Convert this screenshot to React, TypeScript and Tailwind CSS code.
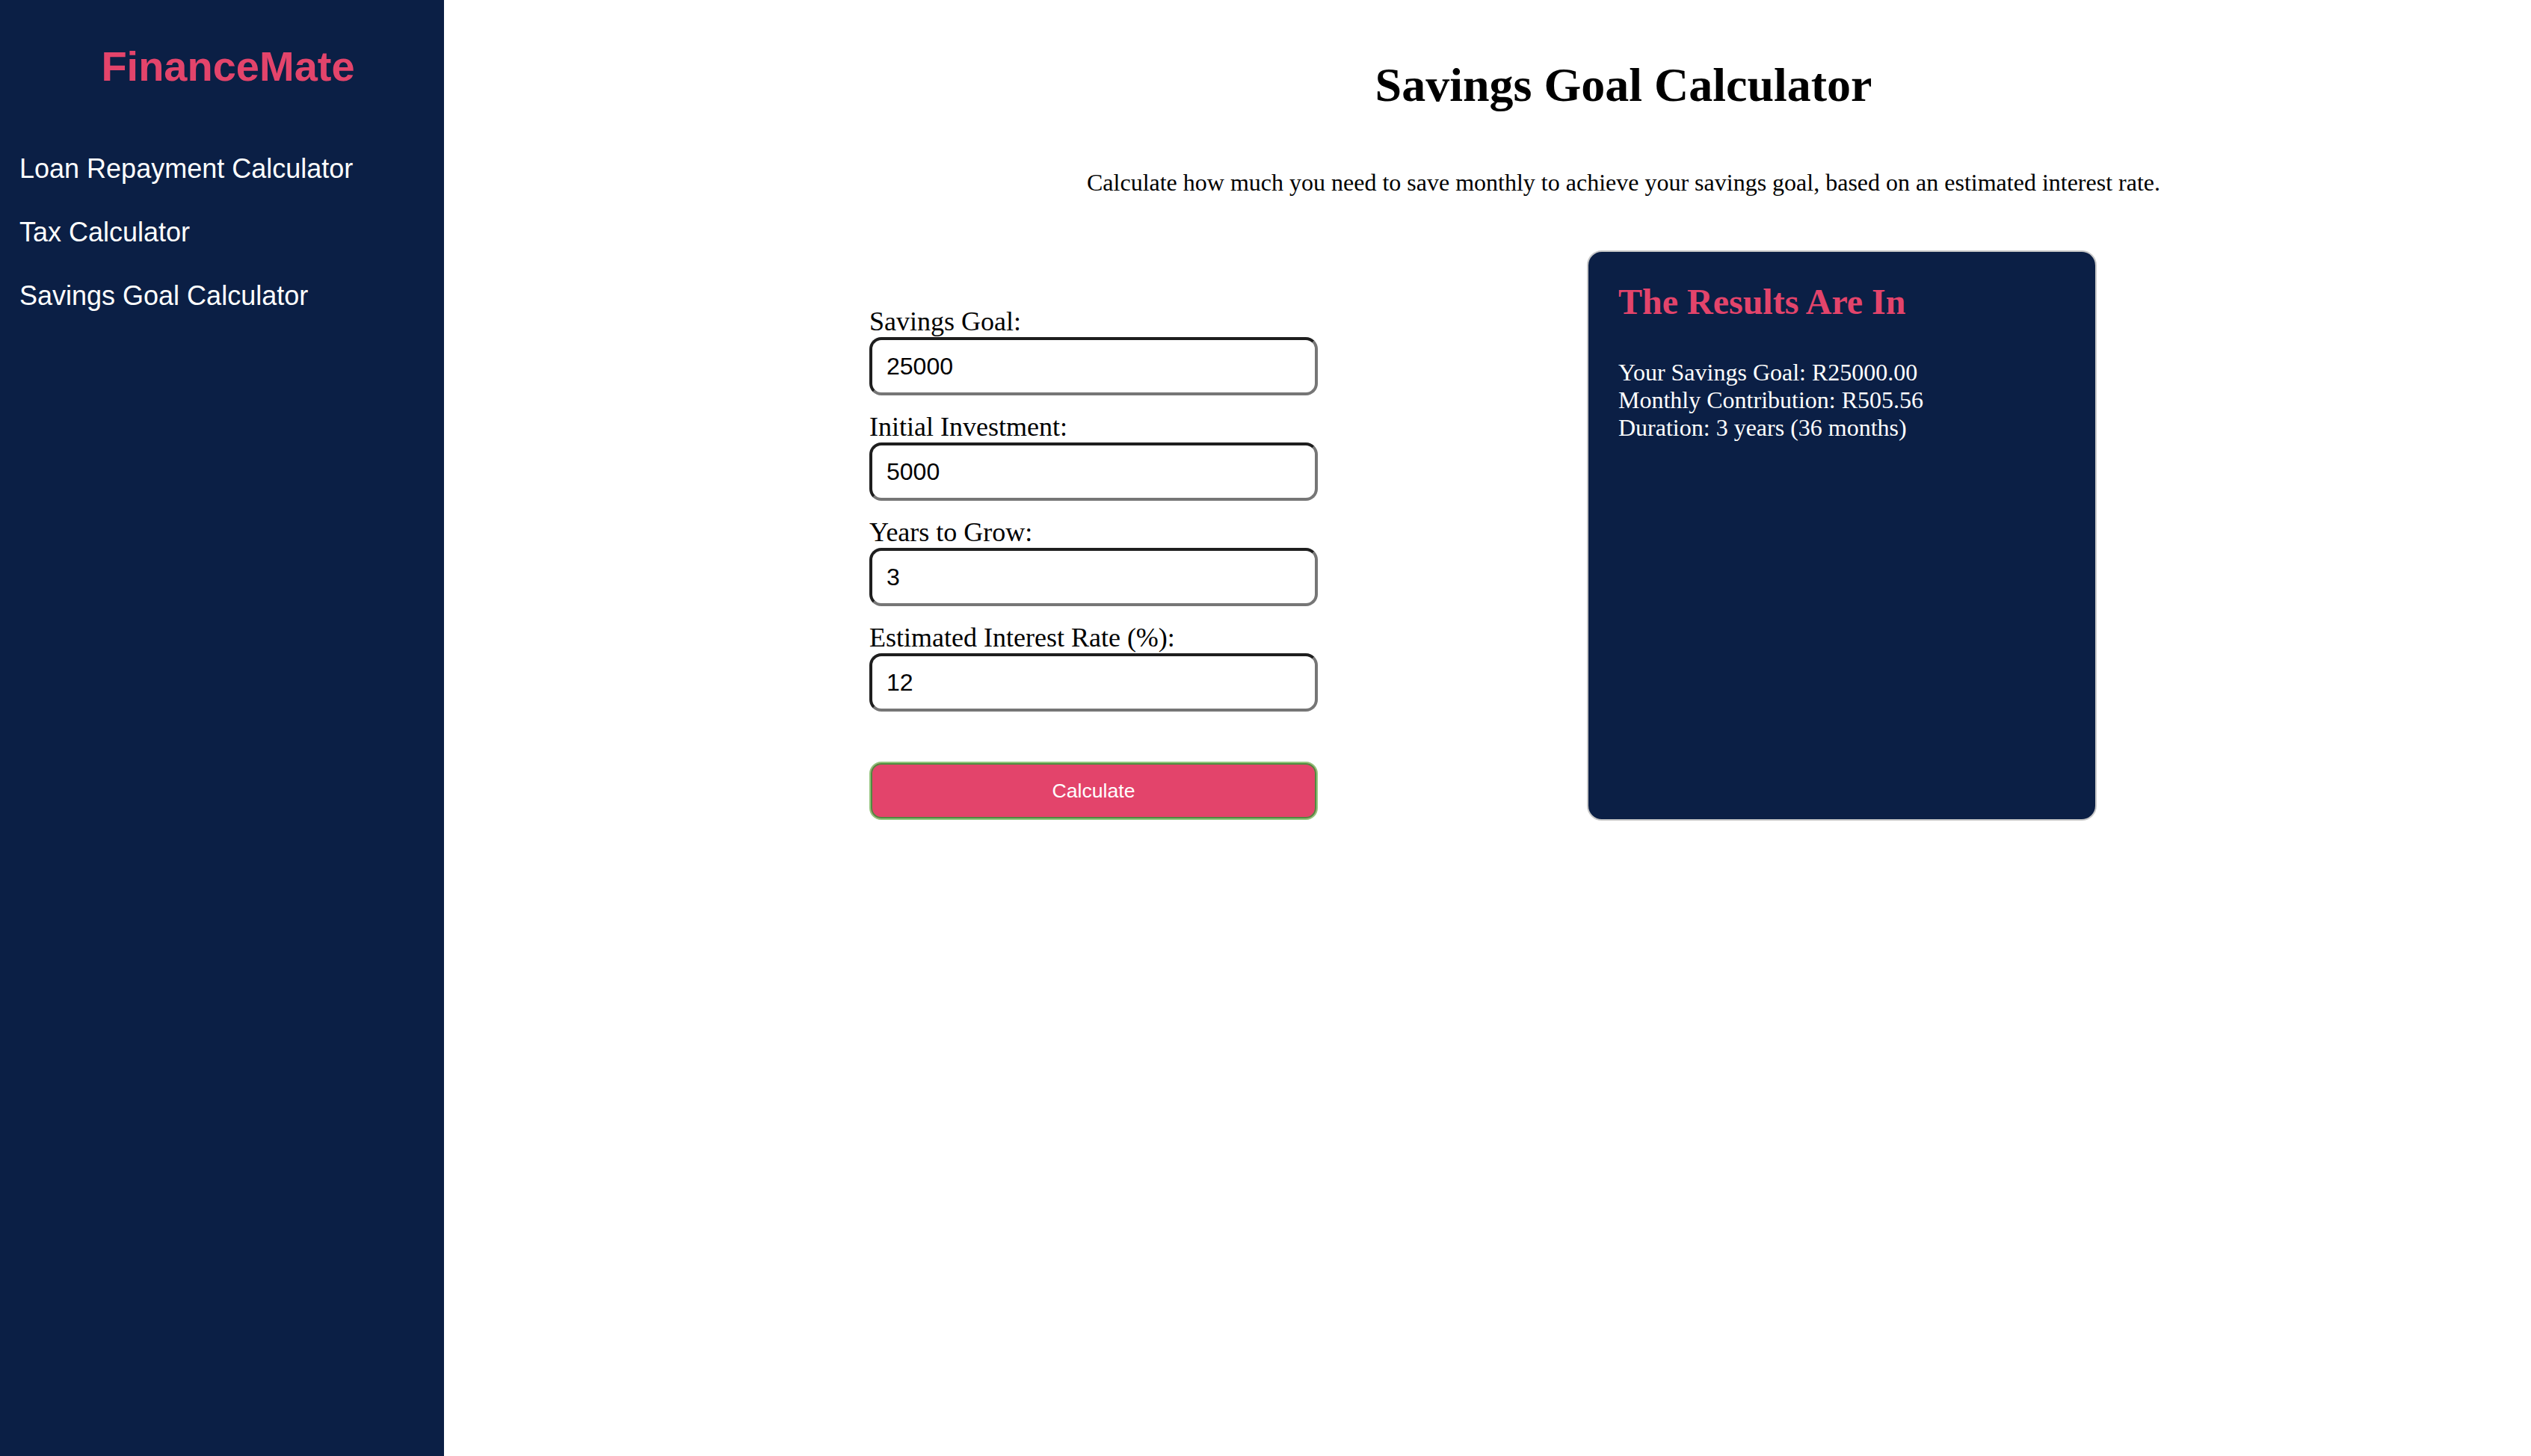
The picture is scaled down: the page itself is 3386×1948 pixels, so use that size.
import { useState } from "react";

const navLinks = ["Loan Repayment Calculator", "Tax Calculator", "Savings Goal Calculator"];

const fields = [
    { label: "Savings Goal:", value: "25000" },
    { label: "Initial Investment:", value: "5000" },
    { label: "Years to Grow:", value: "3" },
    { label: "Estimated Interest Rate (%):", value: "12" },
];

export default function App() {
    const [values, setValues] = useState(fields.map((f) => f.value));

    return (
        <div className="flex min-h-screen bg-white">
            {/* Sidebar */}
            <aside className="w-[594px] shrink-0 bg-[#0b1f45] pl-[26px] pr-[10px] pt-[57px] font-['Liberation_Sans',Arial,sans-serif]">
                <h1 className="text-center text-[56px] font-bold leading-[64px] text-[#e3446b]">FinanceMate</h1>
                <nav className="mt-[84px] flex flex-col gap-[44px]">
                    {navLinks.map((link) => (
                        <a key={link} href="#" className="text-[36px] leading-[41px] text-white">
                            {link}
                        </a>
                    ))}
                </nav>
            </aside>

            {/* Main */}
            <main className="flex-1 pt-[77px] font-['Liberation_Serif','Times_New_Roman',serif] text-black">
                <div className="pl-[364px] text-center">
                    <h2 className="text-[64px] font-bold leading-[74px]">Savings Goal Calculator</h2>
                    <p className="mt-[75px] text-[32px] leading-[37px]">
                        Calculate how much you need to save monthly to achieve your savings goal, based on an estimated interest rate.
                    </p>
                </div>

                <div className="mt-[72px] flex items-start justify-center gap-[360px] pr-[12px]">
                    {/* Form */}
                    <form className="flex w-[600px] flex-col pt-[75px]" onSubmit={(e) => e.preventDefault()}>
                        <div className="flex flex-col gap-[22px]">
                            {fields.map((field, i) => (
                                <label key={field.label} className="flex flex-col text-[36px] leading-[41px]">
                                    {field.label}
                                    <input
                                        type="text"
                                        value={values[i]}
                                        onChange={(e) => setValues(values.map((v, j) => (j === i ? e.target.value : v)))}
                                        className="h-[78px] w-full rounded-[16px] border-4 border-t-[#1e1e1e] border-l-[#1e1e1e] border-b-[#767676] border-r-[#767676] bg-white px-[19px] font-['Liberation_Sans',Arial,sans-serif] text-[32px] leading-normal text-black outline-none"
                                    />
                                </label>
                            ))}
                        </div>
                        <button
                            type="submit"
                            className="mt-[67px] h-[78px] w-full rounded-[16px] border-2 border-[#93c47d] bg-[#e3446b] font-['Liberation_Sans',Arial,sans-serif] text-[26.67px] text-white shadow-[inset_0_0_0_2px_#4f8a3f]"
                        >
                            Calculate
                        </button>
                    </form>

                    {/* Results */}
                    <div className="h-[763px] w-[682px] rounded-[20px] border-2 border-[#c8c8c8] bg-[#0b1f45] px-[40px] pt-[39px] text-white">
                        <h3 className="text-[48px] font-bold leading-[55px] text-[#e3446b]">The Results Are In</h3>
                        <div className="mt-[49px] text-[32px] leading-[37px]">
                            <p>Your Savings Goal: R25000.00</p>
                            <p>Monthly Contribution: R505.56</p>
                            <p>Duration: 3 years (36 months)</p>
                        </div>
                    </div>
                </div>
            </main>
        </div>
    );
}
